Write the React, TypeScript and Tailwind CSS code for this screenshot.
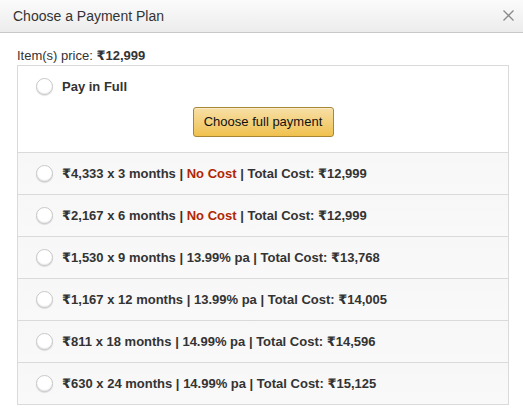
import React from "react";

const plans = [
  { amt: "4,333", m: "3", noCost: true, rate: "", total: "12,999" },
  { amt: "2,167", m: "6", noCost: true, rate: "", total: "12,999" },
  { amt: "1,530", m: "9", noCost: false, rate: "13.99% pa", total: "13,768" },
  { amt: "1,167", m: "12", noCost: false, rate: "13.99% pa", total: "14,005" },
  { amt: "811", m: "18", noCost: false, rate: "14.99% pa", total: "14,596" },
  { amt: "630", m: "24", noCost: false, rate: "14.99% pa", total: "15,125" },
];

function Radio() {
  return (
    <span className="block w-[17px] h-[17px] rounded-full bg-white border border-[#c9c9c9] shadow-[inset_0_-1px_1px_rgba(0,0,0,0.08),0_1px_1px_rgba(0,0,0,0.12)] shrink-0" />
  );
}

export default function App() {
  return (
    <div className="w-[523px] h-[415px] bg-white text-[#333] font-['Liberation_Sans',Arial,'DejaVu_Sans',sans-serif] overflow-hidden">
      <div className="h-[33px] flex items-center justify-between pl-[13px] pr-[9px] bg-gradient-to-b from-[#fbfbfb] to-[#ececec] border-b border-[#c8c8c8]">
        <span className="text-[14px] leading-[20px] text-[#333]">Choose a Payment Plan</span>
        <svg width="11" height="11" viewBox="0 0 11 11" className="mb-[1px]">
          <path d="M0.5 0.5 L10.5 10.5 M10.5 0.5 L0.5 10.5" stroke="#8a8a8a" strokeWidth="1.3" />
        </svg>
      </div>
      <div className="pl-[17px] pr-[14px] pt-[13px]">
        <div className="text-[13px] leading-[19px] text-[#333]">
          Item(s) price: <span className="font-bold">₹12,999</span>
        </div>
        <div className="border border-[#dadada]">
          <div className="bg-white pt-[12px] pb-[15px]">
            <div className="flex items-center h-[17px] pl-[18px] gap-[9px]">
              <Radio />
              <span className="text-[13px] font-bold leading-[17px]">Pay in Full</span>
            </div>
            <div className="flex justify-center mt-[12px]">
              <button className="h-[30px] w-[141px] rounded-[3px] border border-[#a88734] bg-gradient-to-b from-[#f7dfa5] to-[#f0c14b] text-[13px] text-[#111] shadow-[inset_0_1px_0_rgba(255,255,255,0.4)]">
                Choose full payment
              </button>
            </div>
          </div>
          {plans.map((p, i) => (
            <div
              key={i}
              className="h-[42px] border-t border-[#dadada] bg-gradient-to-b from-[#f7f7f7] to-[#f9f9f9] flex items-center pl-[18px] gap-[9px]"
            >
              <Radio />
              <span className="text-[13px] font-bold leading-[17px] text-[#333] whitespace-nowrap">
                ₹{p.amt} x {p.m} months |{" "}
                {p.noCost ? <span className="text-[#b12704]">No Cost</span> : p.rate} | Total Cost: ₹{p.total}
              </span>
            </div>
          ))}
        </div>
      </div>
    </div>
  );
}
